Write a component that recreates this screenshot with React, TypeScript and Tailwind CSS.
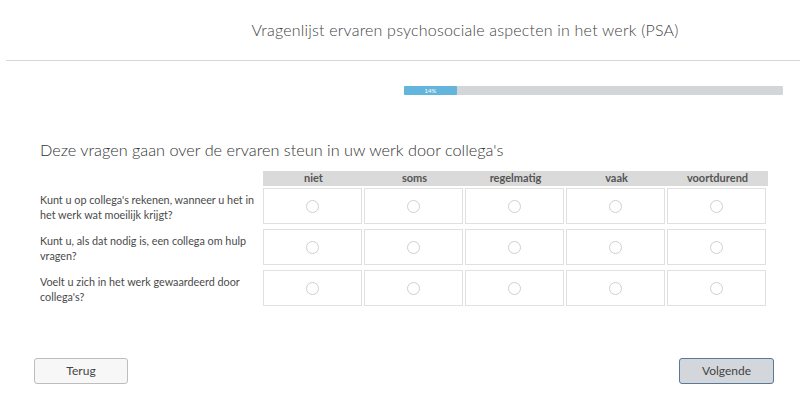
import React from "react";

const cols = ["niet", "soms", "regelmatig", "vaak", "voortdurend"];
const questions = [
  ["Kunt u op collega's rekenen, wanneer u het in", "het werk wat moeilijk krijgt?"],
  ["Kunt u, als dat nodig is, een collega om hulp", "vragen?"],
  ["Voelt u zich in het werk gewaardeerd door", "collega's?"],
];

export default function App() {
  return (
    <div className="w-[800px] h-[400px] bg-white text-[#333] overflow-hidden" style={{ fontFamily: "Lato, 'Open Sans', sans-serif" }}>
      <div className="h-[60px] flex items-center justify-center pl-[130px]">
        <h1 className="text-[16px] font-light text-[#444] tracking-[0.2px]">
          Vragenlijst ervaren psychosociale aspecten in het werk (PSA)
        </h1>
      </div>
      <div className="ml-[6px] border-t border-[#d8d8d8]" />
      <div className="mt-[25px] ml-[404px] w-[379px] h-[9px] bg-[#d3d6d9] rounded-[1px] flex">
        <div className="w-[53px] h-full bg-[#64b5dc] rounded-[1px] flex items-center justify-center text-[6px] leading-none text-white">
          14%
        </div>
      </div>
      <h2 className="mt-[44px] ml-[40px] text-[16.3px] leading-[22px] font-light text-[#333]">
        Deze vragen gaan over de ervaren steun in uw werk door collega's
      </h2>
      <div className="mt-[10px] ml-[40px] flex flex-col">
        <div className="flex">
          <div className="w-[223px]" />
          <div className="flex bg-[#dadada] w-[505px] h-[15px]">
            {cols.map((c) => (
              <div key={c} className="w-[101px] flex items-center justify-center text-[11px] font-bold text-[#555]">
                {c}
              </div>
            ))}
          </div>
        </div>
        <div className="flex flex-col gap-[5px] mt-[2px]">
          {questions.map((q, i) => (
            <div key={i} className="flex">
              <div className="w-[223px] flex flex-col justify-center text-[10.8px] leading-[15px] text-[#4a4a4a] whitespace-nowrap pt-[2px]">
                <span>{q[0]}</span>
                <span>{q[1]}</span>
              </div>
              <div className="flex gap-[2px]">
                {cols.map((c) => (
                  <div key={c} className="w-[99px] h-[36px] border border-[#e0e0e0] flex items-center justify-center">
                    <div className="w-[13px] h-[13px] rounded-full border border-[#cfcfcf]" />
                  </div>
                ))}
              </div>
            </div>
          ))}
        </div>
      </div>
      <div className="mt-[52px] flex justify-between pl-[34px] pr-[26px]">
        <button className="w-[94px] h-[26px] bg-[#f7f7f7] border border-[#bdbdbd] rounded-[3px] text-[12px] text-[#444]">
          Terug
        </button>
        <button className="w-[95px] h-[26px] bg-[#d3d6da] border border-[#5a7897] rounded-[3px] text-[12px] text-[#444]">
          Volgende
        </button>
      </div>
    </div>
  );
}
